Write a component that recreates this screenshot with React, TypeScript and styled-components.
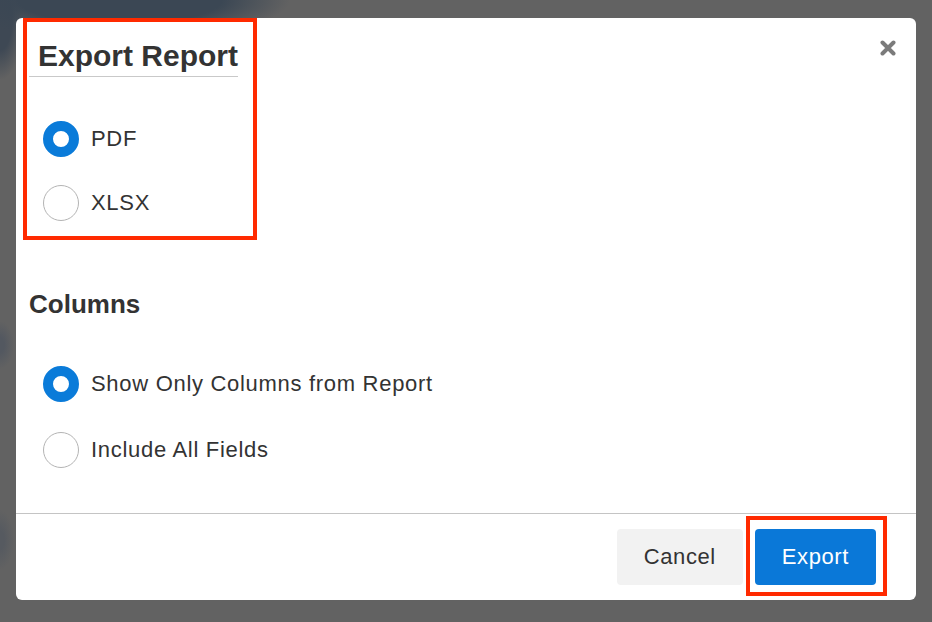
import styled, { createGlobalStyle } from "styled-components";

const GlobalStyle = createGlobalStyle`
    html, body {
        margin: 0;
        padding: 0;
    }

    body {
        width: 932px;
        height: 622px;
        overflow: hidden;
        font-family: "Liberation Sans", Arial, sans-serif;
        color: #333;
        background:
            radial-gradient(ellipse 170px 40px at 120px 0px, #3b4754 60%, rgba(59, 71, 84, 0) 100%),
            radial-gradient(ellipse 24px 60px at 0px 20px, #3e4854 50%, rgba(62, 72, 84, 0) 100%),
            radial-gradient(ellipse 14px 24px at 0px 345px, #535860 30%, rgba(83, 88, 96, 0) 100%),
            radial-gradient(ellipse 14px 30px at 0px 540px, #565a60 30%, rgba(86, 90, 96, 0) 100%),
            #626262;
    }
`;

const Backdrop = styled.div`
    padding: 18px 16px 22px 16px;
`;

const Dialog = styled.div`
    position: relative;
    width: 900px;
    height: 582px;
    background: #fff;
    border-radius: 6px;
    display: flex;
    flex-direction: column;
    overflow: hidden;
`;

const Body = styled.div`
    flex: 1;
    display: flex;
    flex-direction: column;
    padding: 0 0 0 7px;
`;

const Highlight = styled.div`
    border: 4px solid #ff2a00;
    box-sizing: border-box;
`;

const FormatGroup = styled(Highlight)`
    width: 234px;
    height: 222px;
`;

const Title = styled.h2`
    display: inline-block;
    margin: 0 0 0 2px;
    padding: 18px 0 4px 9px;
    border-bottom: 1px solid #c9c9c9;
    font-size: 30px;
    font-weight: 700;
    line-height: 32px;
    color: #333;
`;

const RadioList = styled.div<{ $top: number; $left: number; $gap: number }>`
    display: flex;
    flex-direction: column;
    gap: ${(p) => p.$gap}px;
    padding: ${(p) => p.$top}px 0 0 ${(p) => p.$left}px;
`;

const RadioRow = styled.label`
    display: flex;
    align-items: center;
    gap: 12px;
    height: 36px;
    font-size: 22px;
    letter-spacing: 0.7px;
    color: #333;
    cursor: pointer;
`;

const RadioDot = styled.span<{ $checked: boolean }>`
    width: 36px;
    height: 36px;
    box-sizing: border-box;
    border-radius: 50%;
    flex-shrink: 0;
    background: #fff;
    border: ${(p) => (p.$checked ? "10px solid #0a7bd9" : "1px solid #b4b4b4")};
`;

const SectionHeading = styled.h3`
    margin: 49px 0 0 6px;
    font-size: 26px;
    font-weight: 700;
    line-height: 30px;
    color: #333;
`;

const CloseButton = styled.button`
    position: absolute;
    top: 18px;
    right: 16px;
    width: 24px;
    height: 24px;
    padding: 0;
    border: none;
    background: none;
    cursor: pointer;
    display: flex;
    align-items: center;
    justify-content: center;
`;

const Footer = styled.footer`
    height: 87px;
    border-top: 1px solid #c4c4c4;
    display: flex;
    justify-content: flex-end;
    align-items: flex-start;
    gap: 3px;
    padding: 2px 29px 0 0;
    box-sizing: border-box;
`;

const Button = styled.button<{ $primary?: boolean }>`
    height: 56px;
    padding: 0 27px;
    border: none;
    border-radius: 4px;
    font-family: "Liberation Sans", Arial, sans-serif;
    font-size: 22px;
    letter-spacing: 0.6px;
    cursor: pointer;
    background: ${(p) => (p.$primary ? "#0a78d8" : "#f2f2f2")};
    color: ${(p) => (p.$primary ? "#fff" : "#333")};
`;

const CancelButton = styled(Button)`
    margin-top: 13px;
`;

const ExportFrame = styled(Highlight)`
    display: flex;
    padding: 9px 7px 7px 5px;
`;

interface RadioProps {
    label: string;
    checked: boolean;
}

function Radio({ label, checked }: RadioProps) {
    return (
        <RadioRow>
            <RadioDot $checked={checked} />
            {label}
        </RadioRow>
    );
}

export default function App() {
    return (
        <>
            <GlobalStyle />
            <Backdrop>
                <Dialog role="dialog">
                    <CloseButton aria-label="Close">
                        <svg width="16" height="16" viewBox="0 0 16 16">
                            <path d="M2.5 2.5 L13.5 13.5 M13.5 2.5 L2.5 13.5" stroke="#7b7b7b" strokeWidth="4" strokeLinecap="round" />
                        </svg>
                    </CloseButton>
                    <Body>
                        <FormatGroup>
                            <Title>Export Report</Title>
                            <RadioList $top={44} $left={16} $gap={28}>
                                <Radio label="PDF" checked />
                                <Radio label="XLSX" checked={false} />
                            </RadioList>
                        </FormatGroup>
                        <SectionHeading>Columns</SectionHeading>
                        <RadioList $top={47} $left={20} $gap={30}>
                            <Radio label="Show Only Columns from Report" checked />
                            <Radio label="Include All Fields" checked={false} />
                        </RadioList>
                    </Body>
                    <Footer>
                        <CancelButton>Cancel</CancelButton>
                        <ExportFrame>
                            <Button $primary>Export</Button>
                        </ExportFrame>
                    </Footer>
                </Dialog>
            </Backdrop>
        </>
    );
}
